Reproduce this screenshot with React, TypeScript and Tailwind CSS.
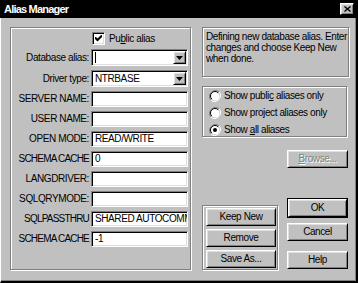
import React from 'react';

// Win95-style bevels
const raised =
  'border border-t-white border-l-white border-r-black border-b-black shadow-[inset_1px_1px_0_#dfdfdf,inset_-1px_-1px_0_#808080] bg-[#c0c0c0]';
const sunken =
  'border border-t-[#808080] border-l-[#808080] border-r-white border-b-white shadow-[inset_1px_1px_0_#000,inset_-1px_-1px_0_#dfdfdf] bg-white';
const etched = 'border border-[#808080] shadow-[inset_1px_1px_0_#fff,1px_1px_0_#fff]';

const fields = [
  { label: 'SERVER NAME:', value: '', tight: false },
  { label: 'USER NAME:', value: '', tight: false },
  { label: 'OPEN MODE:', value: 'READ/WRITE', tight: false },
  { label: 'SCHEMA CACHE', value: '0', tight: true },
  { label: 'LANGDRIVER:', value: '', tight: false },
  { label: 'SQLQRYMODE:', value: '', tight: false },
  { label: 'SQLPASSTHRU', value: 'SHARED AUTOCOMM', tight: true },
  { label: 'SCHEMA CACHE', value: '-1', tight: true },
];

const Row = ({ label, children, h, tight }: { label: React.ReactNode; children: React.ReactNode; h: string; tight?: boolean }) => (
  <div className={`flex items-center ${h}`}>
    <div className={`w-[74px] -ml-[1px] whitespace-nowrap text-right ${tight ? 'tracking-[-0.8px]' : ''}`}>{label}</div>
    <div className="ml-[2px] w-[97px] h-full">{children}</div>
  </div>
);

const Combo = ({ value, cursor }: { value: string; cursor?: boolean }) => (
  <div className={`${sunken} h-full flex items-center p-[1px]`}>
    <div className="flex-1 pl-[2px] whitespace-nowrap overflow-hidden flex items-center">
      {cursor && <span className="w-[1px] h-[11px] bg-black" />}
      {value}
    </div>
    <div className={`${raised} w-[13px] h-[13px] flex items-center justify-center`}>
      <svg width="7" height="4" viewBox="0 0 7 4">
        <path d="M0 0h7L3.5 4z" fill="#000" />
      </svg>
    </div>
  </div>
);

const Button = ({ children, className = '', disabled }: { children: React.ReactNode; className?: string; disabled?: boolean }) => (
  <div
    className={`${raised} h-[18px] flex items-center justify-center ${
      disabled ? 'text-[#808080] [text-shadow:1px_1px_0_#fff]' : ''
    } ${className}`}
  >
    {children}
  </div>
);

const Radio = ({ checked, children }: { checked?: boolean; children: React.ReactNode }) => (
  <div className="h-[17px] flex items-center">
    <svg width="12" height="12" viewBox="0 0 12 12" className="shrink-0">
      <path d="M10.2 1.8A6 6 0 0 0 1.8 10.2" fill="none" stroke="#808080" strokeWidth="1" />
      <path d="M1.8 10.2A6 6 0 0 0 10.2 1.8" fill="none" stroke="#fff" strokeWidth="1" />
      <circle cx="6" cy="6" r="4.5" fill="#fff" />
      <path d="M9.2 2.8A4.5 4.5 0 0 0 2.8 9.2" fill="none" stroke="#000" strokeWidth="1" />
      {checked && <circle cx="6" cy="6" r="2" fill="#000" />}
    </svg>
    <span className="ml-[3px] whitespace-nowrap">{children}</span>
  </div>
);

export default function App() {
  return (
    <div className="w-[358px] h-[283px] bg-[#c0c0c0] flex flex-col overflow-hidden text-black text-[10px] tracking-[-0.4px] leading-none font-['Liberation_Sans',Arial,sans-serif] select-none">
      {/* title bar */}
      <div className="h-[18px] shrink-0 bg-black flex items-center pl-[4px] pr-[4px]">
        <span className="text-white font-bold text-[11px] tracking-[-0.8px]">Alias Manager</span>
        <div className={`${raised} ml-auto w-[14px] h-[12px] flex items-center justify-center`}>
          <svg width="7" height="6" viewBox="0 0 7 6">
            <path d="M0.5 0.5L6.5 5.5M6.5 0.5L0.5 5.5" stroke="#000" strokeWidth="1.4" />
          </svg>
        </div>
      </div>

      {/* body */}
      <div className="flex-1 flex pl-[9px] pt-[9px] border-l border-l-white border-r-2 border-r-black border-b-2 border-b-black shadow-[inset_-1px_-1px_0_#808080]">
        {/* left group */}
        <div className={`${etched} w-[181px] h-[243px] pl-[5px] pt-[4px] flex flex-col`}>
          <div className="flex items-center h-[13px]">
            <div className="w-[76px]" />
            <div className={`${sunken} w-[13px] h-[13px] flex items-center justify-center`}>
              <svg width="7" height="7" viewBox="0 0 7 7">
                <path d="M0 2.5L2.5 5L7 0.5" fill="none" stroke="#000" strokeWidth="2" />
              </svg>
            </div>
            <span className="ml-[4px]">
              Pu<span className="underline">b</span>lic alias
            </span>
          </div>
          <div className="mt-[4px]">
            <Row label="Database alias:" h="h-[17px]">
              <Combo value="" cursor />
            </Row>
          </div>
          <div className="mt-[4px]">
            <Row label="Driver type:" h="h-[17px]">
              <Combo value="NTRBASE" />
            </Row>
          </div>
          <div className="mt-[4px] flex flex-col gap-[4px]">
            {fields.map((f, i) => (
              <Row key={i} label={f.label} h="h-[16px]" tight={f.tight}>
                <div className={`${sunken} h-full pl-[3px] flex items-center whitespace-nowrap overflow-hidden`}>
                  {f.value}
                </div>
              </Row>
            ))}
          </div>
        </div>

        {/* right column */}
        <div className="ml-[11px] w-[147px] flex flex-col">
          <div className={`${etched} h-[50px] pl-[3px] pt-[3px] leading-[11px]`}>
            Defining new database alias. Enter
            <br />
            changes and choose Keep New
            <br />
            when done.
          </div>
          <div className={`${etched} mt-[9px] w-[145px] h-[51px] pl-[6px]`}>
            <Radio>
              Show publi<span className="underline">c</span> aliases only
            </Radio>
            <Radio>
              Show pro<span className="underline">j</span>ect aliases only
            </Radio>
            <Radio checked>
              Show <span className="underline">a</span>ll aliases
            </Radio>
          </div>
          <Button disabled className="self-end mr-[1px] mt-[13px] w-[61px]">
            <span className="underline">B</span>rowse...
          </Button>

          <div className="mt-[30px] flex">
            <div className={`${etched} mt-[7px] w-[76px] h-[65px] pl-[3px] pt-[2px] flex flex-col gap-[3px]`}>
              <Button className="w-[70px]">Keep New</Button>
              <Button className="w-[70px]">Remove</Button>
              <Button className="w-[70px]">Save As...</Button>
            </div>
            <div className="ml-[9px] w-[61px] flex flex-col">
              <div className="border border-black">
                <Button className="h-[17px]">OK</Button>
              </div>
              <Button className="mt-[5px]">Cancel</Button>
              <Button className="mt-[10px]">Help</Button>
            </div>
          </div>
        </div>
      </div>
    </div>
  );
}
